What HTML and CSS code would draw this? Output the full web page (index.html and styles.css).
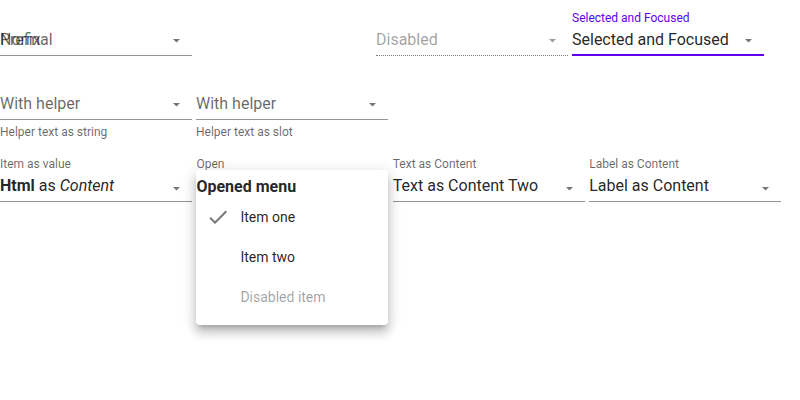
FILE: index.html
```html
<!DOCTYPE html>
<html>
<head>
<meta charset="utf-8">
<link rel="stylesheet" href="styles.css">
</head>
<body>
<div class="page">
  <div class="row">
    <div class="field">
      <div class="value placeholder overlay-wrap"><span>Normal</span><span class="overlay">Prefix</span></div>
      <svg class="arrow" width="7" height="4" viewBox="0 0 7 4"><polygon points="0,0 7,0 3.5,3.5"/></svg>
    </div>
    <div class="spacer"></div>
    <div class="field disabled">
      <div class="value placeholder">Disabled</div>
      <svg class="arrow" width="7" height="4" viewBox="0 0 7 4"><polygon points="0,0 7,0 3.5,3.5"/></svg>
    </div>
    <div class="field focused">
      <div class="label">Selected and Focused</div>
      <div class="value">Selected and Focused</div>
      <svg class="arrow" width="7" height="4" viewBox="0 0 7 4"><polygon points="0,0 7,0 3.5,3.5"/></svg>
    </div>
  </div>

  <div class="row row2">
    <div class="col">
      <div class="field">
        <div class="value placeholder">With helper</div>
        <svg class="arrow" width="7" height="4" viewBox="0 0 7 4"><polygon points="0,0 7,0 3.5,3.5"/></svg>
      </div>
      <div class="helper">Helper text as string</div>
    </div>
    <div class="col">
      <div class="field">
        <div class="value placeholder">With helper</div>
        <svg class="arrow" width="7" height="4" viewBox="0 0 7 4"><polygon points="0,0 7,0 3.5,3.5"/></svg>
      </div>
      <div class="helper">Helper text as slot</div>
    </div>
  </div>

  <div class="row row3">
    <div class="field">
      <div class="label">Item as value</div>
      <div class="value"><b>Html</b> as <i>Content</i></div>
      <svg class="arrow low" width="7" height="4" viewBox="0 0 7 4"><polygon points="0,0 7,0 3.5,3.5"/></svg>
    </div>
    <div class="field open">
      <div class="label">Open</div>
      <div class="value"></div>
      <div class="menu">
        <div class="menu-header">Opened menu</div>
        <div class="menu-item">
          <svg class="check" width="24" height="24" viewBox="0 0 24 24"><path d="M9 16.17L4.83 12l-1.42 1.41L9 19 21 7l-1.41-1.41z"/></svg>
          <span>Item one</span>
        </div>
        <div class="menu-item">
          <span class="icon-space"></span>
          <span>Item two</span>
        </div>
        <div class="menu-item item-disabled">
          <span class="icon-space"></span>
          <span>Disabled item</span>
        </div>
      </div>
    </div>
    <div class="field">
      <div class="label">Text as Content</div>
      <div class="value">Text as Content Two</div>
      <svg class="arrow low" width="7" height="4" viewBox="0 0 7 4"><polygon points="0,0 7,0 3.5,3.5"/></svg>
    </div>
    <div class="field">
      <div class="label">Label as Content</div>
      <div class="value">Label as Content</div>
      <svg class="arrow low" width="7" height="4" viewBox="0 0 7 4"><polygon points="0,0 7,0 3.5,3.5"/></svg>
    </div>
  </div>
</div>
</body>
</html>
```

FILE: styles.css
```css
html, body {
  margin: 0;
  padding: 0;
  background: #ffffff;
}

body {
  font-family: Roboto, "Liberation Sans", sans-serif;
  color: rgba(0, 0, 0, 0.87);
  width: 800px;
  height: 400px;
  overflow: hidden;
}

.page {
  display: flex;
  flex-direction: column;
}

.row {
  display: flex;
  gap: 4px;
  align-items: flex-start;
}

.row2 {
  margin-top: 8px;
}

.row3 {
  margin-top: 6px;
  gap: 4.4px;
}

.spacer {
  width: 176px;
  height: 56px;
}

.col {
  display: flex;
  flex-direction: column;
}

.field {
  position: relative;
  width: 192px;
  height: 56px;
  box-sizing: border-box;
  border-bottom: 1px solid rgba(0, 0, 0, 0.42);
  display: flex;
  flex-direction: column;
  justify-content: flex-end;
}

.label {
  position: absolute;
  top: 10px;
  left: 0;
  font-size: 12px;
  line-height: 16px;
  color: rgba(0, 0, 0, 0.6);
  white-space: nowrap;
}

.value {
  font-size: 16px;
  line-height: 24px;
  height: 24px;
  padding-bottom: 3px;
  white-space: nowrap;
}

.value b {
  font-weight: 700;
}

.placeholder {
  color: rgba(0, 0, 0, 0.6);
}

.overlay-wrap {
  position: relative;
}

.overlay {
  position: absolute;
  left: 0;
  top: 0;
}

.arrow {
  position: absolute;
  right: 12px;
  top: 39px;
  fill: rgba(0, 0, 0, 0.54);
}

.arrow.low {
  top: 41px;
}

.disabled {
  border-bottom: 1px dotted rgba(0, 0, 0, 0.5);
}

.disabled .placeholder {
  color: rgba(0, 0, 0, 0.38);
}

.disabled .arrow {
  fill: rgba(0, 0, 0, 0.38);
}

.focused {
  border-bottom-color: #6200ee;
  box-shadow: inset 0 -1px 0 #6200ee;
}

.focused .label {
  color: #6200ee;
}

.helper {
  margin-top: 4px;
  font-size: 12px;
  line-height: 16px;
  color: rgba(0, 0, 0, 0.6);
}

.open {
  z-index: 2;
}

.menu {
  position: absolute;
  top: 24px;
  left: 0;
  width: 192px;
  box-sizing: border-box;
  padding: 8px 0;
  background: #ffffff;
  border-radius: 4px;
  box-shadow: 0 5px 5px -3px rgba(0, 0, 0, 0.2), 0 8px 10px 1px rgba(0, 0, 0, 0.14), 0 3px 14px 2px rgba(0, 0, 0, 0.12);
}

.menu-header {
  font-size: 16px;
  font-weight: 700;
  line-height: 18.75px;
  color: rgba(0, 0, 0, 0.87);
}

.menu-item {
  height: 40px;
  display: flex;
  align-items: center;
  padding-left: 10px;
  gap: 10px;
  font-size: 14px;
  color: rgba(0, 0, 0, 0.87);
}

.check {
  fill: rgba(0, 0, 0, 0.54);
  flex: none;
}

.icon-space {
  width: 24px;
  height: 24px;
  flex: none;
}

.item-disabled {
  color: rgba(0, 0, 0, 0.38);
}
```
